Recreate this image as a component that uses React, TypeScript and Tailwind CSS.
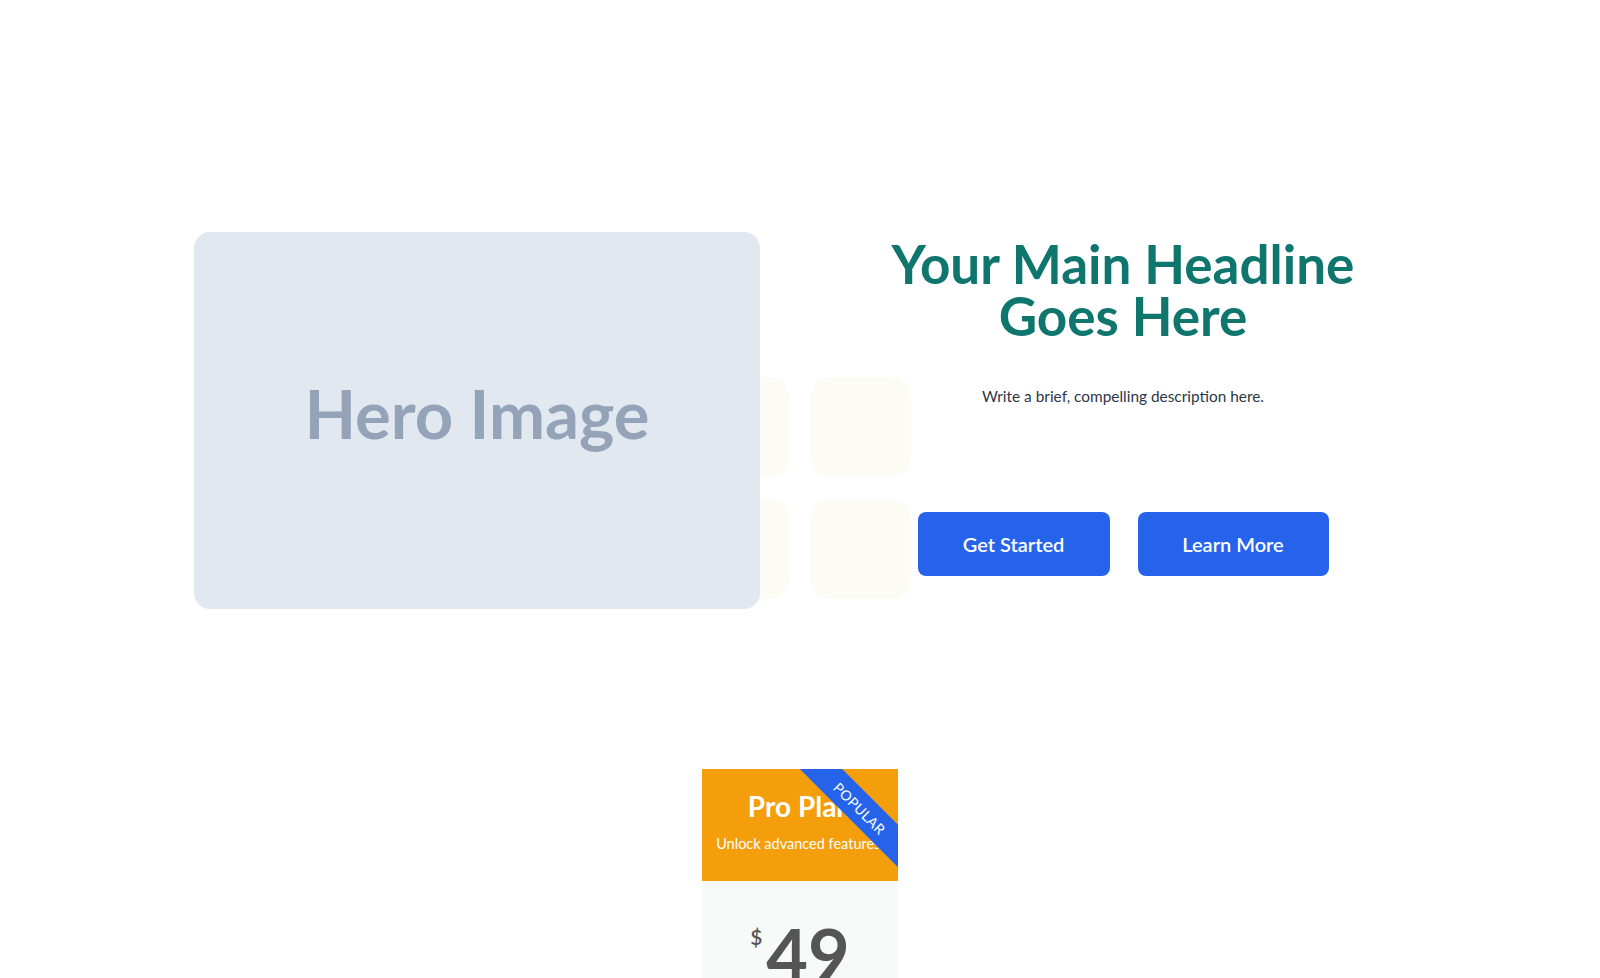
import React from "react";

const TILES = [0, 1, 2, 3, 4, 5];

function HeroVisual() {
  return (
    <div className="relative">
      {/* faint tile grid peeking out behind the image */}
      <div className="absolute left-[373px] top-[145px] grid w-[344px] grid-cols-[repeat(3,100px)] gap-[22px]">
        {TILES.map((t) => (
          <div key={t} className="h-[100px] w-[100px] rounded-[20px] bg-[#fcfbf4]" />
        ))}
      </div>
      <div className="relative z-10 flex h-[377px] items-center justify-center rounded-2xl bg-[#e2e8f0] pb-[14px]">
        <span className="text-[67px] font-bold text-[#94a3b8]">Hero Image</span>
      </div>
    </div>
  );
}

function HeroCopy() {
  return (
    <div className="flex flex-col items-center pt-[6px] text-center">
      <h1 className="text-[53px] font-bold leading-[52px] text-[#0f766e]">
        Your Main Headline
        <br />
        Goes Here
      </h1>
      <p className="mt-[43px] text-[15.4px] leading-[22px] text-[#2d3748]">
        Write a brief, compelling description here.
      </p>
      <div className="mt-[105px] flex gap-[28px]">
        <button className="h-16 w-[192px] rounded-lg bg-[#2563eb] text-[20px] font-semibold text-white">
          Get Started
        </button>
        <button className="h-16 w-[191px] rounded-lg bg-[#2563eb] text-[20px] font-semibold text-white">
          Learn More
        </button>
      </div>
    </div>
  );
}

function PricingCard() {
  return (
    <div className="relative mx-auto w-[196px] overflow-hidden">
      <div className="flex h-[112px] flex-col items-center bg-[#f59e0b] pt-[23px] text-white">
        <h3 className="text-[28px] font-bold leading-7">Pro Plan</h3>
        <p className="mt-[14px] text-[14.5px] leading-5">Unlock advanced features.</p>
      </div>
      <div className="absolute left-[78px] top-[24px] flex h-[30px] w-[160px] rotate-45 items-center justify-center bg-[#2563eb] text-[14px] tracking-wide text-white">
        POPULAR
      </div>
      <div className="flex min-h-[300px] justify-center bg-[#f8f9f9] pt-[37px]">
        <div className="flex items-start text-[#555555]">
          <span className="mt-[9px] mr-[4px] text-[21px] font-semibold leading-5">$</span>
          <span className="text-[72px] font-bold leading-none">49</span>
        </div>
      </div>
    </div>
  );
}

export default function App() {
  return (
    <div className="min-h-screen bg-white font-['Lato','Liberation_Sans',sans-serif]">
      <section className="pt-[232px]">
        <div className="mx-auto grid w-[1212px] grid-cols-2 gap-20">
          <HeroVisual />
          <HeroCopy />
        </div>
      </section>
      <section className="mt-[160px] pb-20">
        <PricingCard />
      </section>
    </div>
  );
}
